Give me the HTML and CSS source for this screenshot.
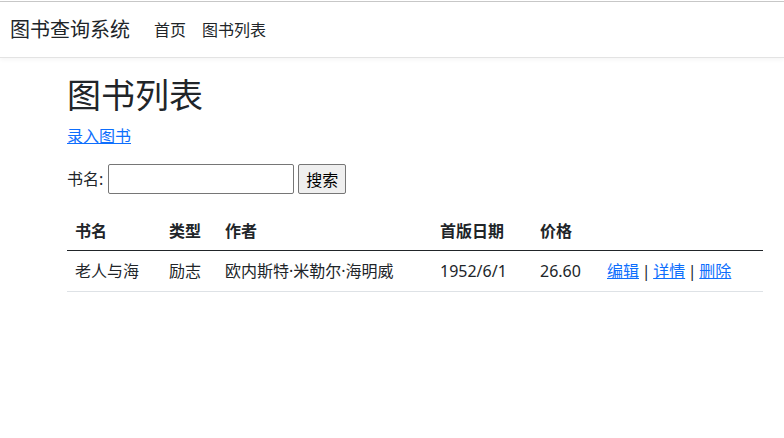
FILE: index.html
```html
<!DOCTYPE html>
<html lang="zh-CN">
<head>
<meta charset="utf-8">
<title>图书列表</title>
<link rel="stylesheet" href="styles.css">
</head>
<body>
<div class="topline"></div>
<header class="navbar">
  <a class="brand" href="#">图书查询系统</a>
  <nav class="nav">
    <a href="#">首页</a>
    <a href="#">图书列表</a>
  </nav>
</header>
<main class="container">
  <h1 class="title">图书列表</h1>
  <p class="create"><a href="#">录入图书</a></p>
  <form class="search">
    <label class="search-label">书名:</label>
    <input type="text" class="search-input">
    <button type="button" class="search-btn">搜索</button>
  </form>
  <table class="table">
    <thead>
      <tr>
        <th class="c1">书名</th>
        <th class="c2">类型</th>
        <th class="c3">作者</th>
        <th class="c4">首版日期</th>
        <th class="c5">价格</th>
        <th class="c6"></th>
      </tr>
    </thead>
    <tbody>
      <tr>
        <td>老人与海</td>
        <td>励志</td>
        <td>欧内斯特·米勒尔·海明威</td>
        <td>1952/6/1</td>
        <td>26.60</td>
        <td class="actions"><a href="#">编辑</a> | <a href="#">详情</a> | <a href="#">删除</a></td>
      </tr>
    </tbody>
  </table>
</main>
</body>
</html>
```
FILE: styles.css
```css
* { box-sizing: border-box; }
html, body { margin: 0; padding: 0; background: #fff; }
body {
  font-family: "Noto Sans", "Noto Sans CJK SC", sans-serif;
  font-size: 16px;
  color: #212529;
  line-height: 1.5;
}
a { color: #0d6efd; }
.topline { height: 2px; border-top: 1px solid #fff; border-bottom: 1px solid #c8c8c8; }
.navbar {
  height: 56px;
  display: flex;
  align-items: center;
  padding: 0 10px;
  border-bottom: 1px solid #e3e3e3;
  box-shadow: 0 2px 4px rgba(0,0,0,0.04);
}
.brand {
  font-size: 20px;
  color: #212529;
  text-decoration: none;
  margin-right: 24px;
}
.nav { display: flex; gap: 16px; }
.nav a { color: #212529; text-decoration: none; font-size: 16px; }
.container { padding-left: 67px; width: 763px; }
.title {
  font-size: 34px;
  font-weight: 400;
  margin: 17px 0 8px;
  line-height: 1.2;
}
.create { margin: 0 0 16px; }
.search { display: flex; align-items: center; margin: 0 0 17px; }
.search-label { margin-right: 5px; }
.search-input {
  width: 186px; height: 30px;
  border: 1px solid #767676; border-radius: 2px;
  font-size: 16px; padding: 2px 4px;
  margin-right: 4px;
}
.search-btn {
  height: 30px; width: 48px;
  border: 1px solid #767676; border-radius: 2px;
  background: #efefef; font-size: 16px; padding: 0;
  font-family: inherit; color: #000;
}
.table { width: 696px; border-collapse: collapse; }
.table th { text-align: left; font-weight: 700; padding: 8px 8px 7px; border-bottom: 1px solid #212529; }
.table td { padding: 8px; border-bottom: 1px solid #dee2e6; }
.actions { word-spacing: -1.5px; }
.c1 { width: 94px; }
.c2 { width: 56px; }
.c3 { width: 215px; }
.c4 { width: 100px; }
.c5 { width: 67px; }
```
